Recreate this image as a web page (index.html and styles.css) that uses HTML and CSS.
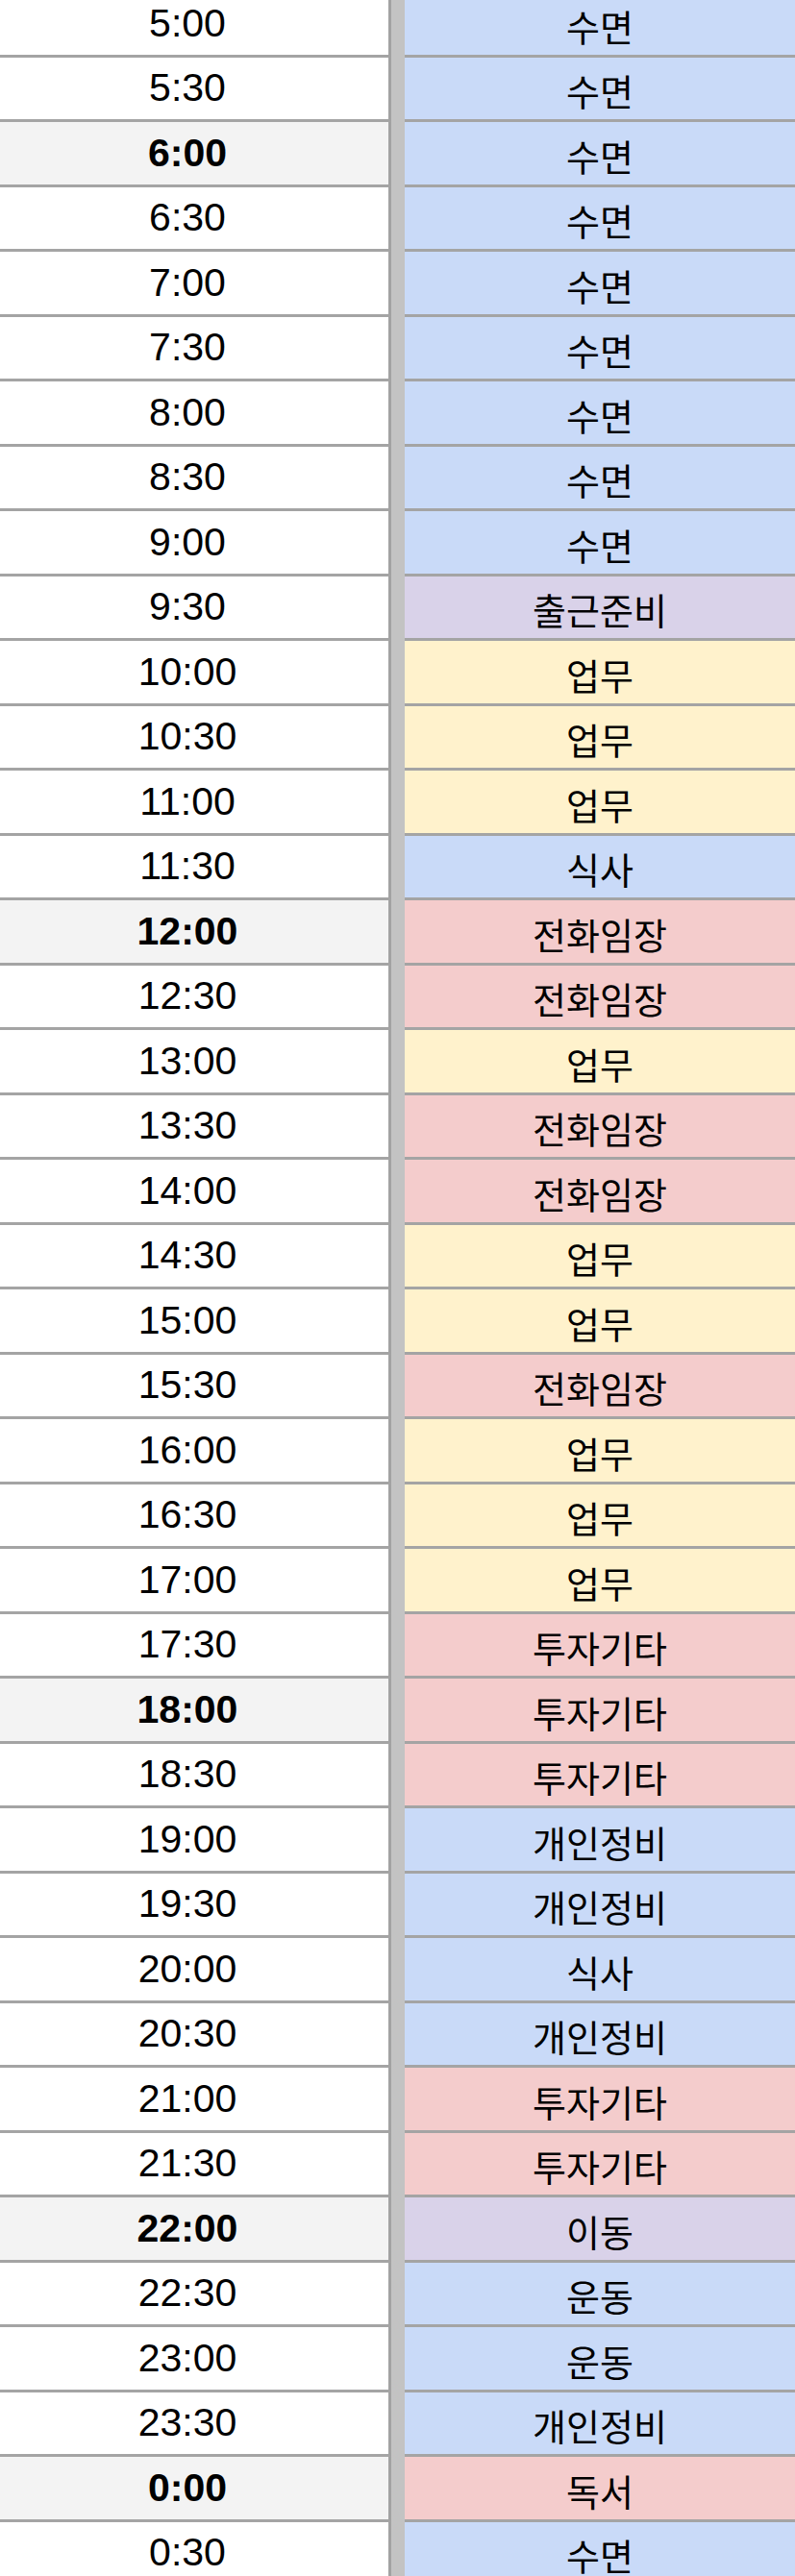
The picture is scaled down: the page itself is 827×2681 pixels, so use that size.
FILE: index.html
```html
<!DOCTYPE html>
<html lang="ko">
<head>
    <meta charset="UTF-8">
    <meta name="viewport" content="width=device-width, initial-scale=1.0">
    <title>하루 일과표</title>
    <link rel="stylesheet" href="styles.css">
</head>
<body>

    <div class="sheet">
        <div class="row"><div class="time">5:00</div><div class="task sleep">수면</div></div>
        <div class="row"><div class="time">5:30</div><div class="task sleep">수면</div></div>
        <div class="row"><div class="time hour">6:00</div><div class="task sleep">수면</div></div>
        <div class="row"><div class="time">6:30</div><div class="task sleep">수면</div></div>
        <div class="row"><div class="time">7:00</div><div class="task sleep">수면</div></div>
        <div class="row"><div class="time">7:30</div><div class="task sleep">수면</div></div>
        <div class="row"><div class="time">8:00</div><div class="task sleep">수면</div></div>
        <div class="row"><div class="time">8:30</div><div class="task sleep">수면</div></div>
        <div class="row"><div class="time">9:00</div><div class="task sleep">수면</div></div>
        <div class="row"><div class="time">9:30</div><div class="task move">출근준비</div></div>
        <div class="row"><div class="time">10:00</div><div class="task work">업무</div></div>
        <div class="row"><div class="time">10:30</div><div class="task work">업무</div></div>
        <div class="row"><div class="time">11:00</div><div class="task work">업무</div></div>
        <div class="row"><div class="time">11:30</div><div class="task sleep">식사</div></div>
        <div class="row"><div class="time hour">12:00</div><div class="task invest">전화임장</div></div>
        <div class="row"><div class="time">12:30</div><div class="task invest">전화임장</div></div>
        <div class="row"><div class="time">13:00</div><div class="task work">업무</div></div>
        <div class="row"><div class="time">13:30</div><div class="task invest">전화임장</div></div>
        <div class="row"><div class="time">14:00</div><div class="task invest">전화임장</div></div>
        <div class="row"><div class="time">14:30</div><div class="task work">업무</div></div>
        <div class="row"><div class="time">15:00</div><div class="task work">업무</div></div>
        <div class="row"><div class="time">15:30</div><div class="task invest">전화임장</div></div>
        <div class="row"><div class="time">16:00</div><div class="task work">업무</div></div>
        <div class="row"><div class="time">16:30</div><div class="task work">업무</div></div>
        <div class="row"><div class="time">17:00</div><div class="task work">업무</div></div>
        <div class="row"><div class="time">17:30</div><div class="task invest">투자기타</div></div>
        <div class="row"><div class="time hour">18:00</div><div class="task invest">투자기타</div></div>
        <div class="row"><div class="time">18:30</div><div class="task invest">투자기타</div></div>
        <div class="row"><div class="time">19:00</div><div class="task sleep">개인정비</div></div>
        <div class="row"><div class="time">19:30</div><div class="task sleep">개인정비</div></div>
        <div class="row"><div class="time">20:00</div><div class="task sleep">식사</div></div>
        <div class="row"><div class="time">20:30</div><div class="task sleep">개인정비</div></div>
        <div class="row"><div class="time">21:00</div><div class="task invest">투자기타</div></div>
        <div class="row"><div class="time">21:30</div><div class="task invest">투자기타</div></div>
        <div class="row"><div class="time hour">22:00</div><div class="task move">이동</div></div>
        <div class="row"><div class="time">22:30</div><div class="task sleep">운동</div></div>
        <div class="row"><div class="time">23:00</div><div class="task sleep">운동</div></div>
        <div class="row"><div class="time">23:30</div><div class="task sleep">개인정비</div></div>
        <div class="row"><div class="time hour">0:00</div><div class="task invest">독서</div></div>
        <div class="row"><div class="time">0:30</div><div class="task sleep">수면</div></div>
    </div>

</body>
</html>
```

FILE: styles.css
```css
* {
    margin: 0;
    padding: 0;
    box-sizing: border-box;
}

html, body {
    height: 2681px;
    overflow: hidden;
}

body {
    background-color: #ffffff;
    color: #000000;
}

/* sheet is scrolled a little, first row is cut at the top */
.sheet {
    margin-top: -8px;
}

.row {
    display: grid;
    grid-template-columns: 407px 1fr;
    column-gap: 14px;
    height: 67.5px;
    background-color: #c3c3c3;
}

.time,
.task {
    display: flex;
    justify-content: center;
    align-items: center;
    border-bottom: 3px solid #a4a4a4;
}

.time {
    background-color: #ffffff;
    border-right: 3px solid #a2a2a2;
    padding-right: 14px;
    font-family: "Liberation Sans", Arial, sans-serif;
    font-size: 41px;
}

.time.hour {
    background-color: #f3f3f3;
    font-weight: bold;
}

.task {
    padding-top: 5px;
    font-family: "Noto Sans CJK KR", "Noto Sans", sans-serif;
    font-size: 38px;
    line-height: 1;
}

.sleep {
    background-color: #c9daf8;
}

.work {
    background-color: #fff2cc;
}

.invest {
    background-color: #f4cccc;
}

.move {
    background-color: #d9d2e9;
}
```
